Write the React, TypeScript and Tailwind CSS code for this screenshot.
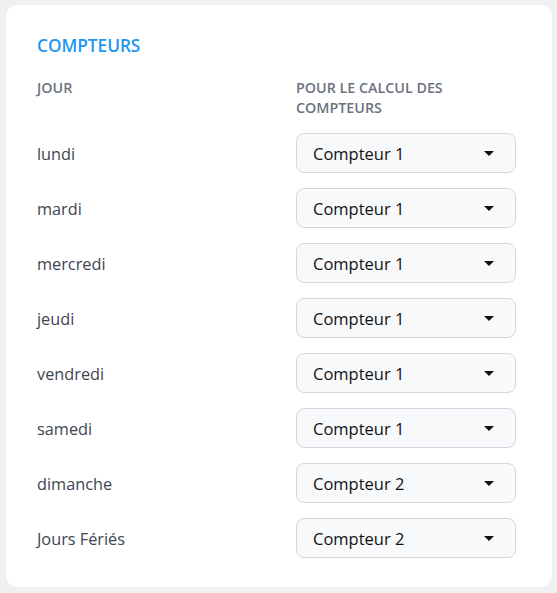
import React from "react";

const rows: { day: string; counter: string }[] = [
  { day: "lundi", counter: "Compteur 1" },
  { day: "mardi", counter: "Compteur 1" },
  { day: "mercredi", counter: "Compteur 1" },
  { day: "jeudi", counter: "Compteur 1" },
  { day: "vendredi", counter: "Compteur 1" },
  { day: "samedi", counter: "Compteur 1" },
  { day: "dimanche", counter: "Compteur 2" },
  { day: "Jours Fériés", counter: "Compteur 2" },
];

function Caret() {
  return (
    <svg width="10" height="5" viewBox="0 0 10 5" className="shrink-0">
      <path d="M0 0 L10 0 L5 5 Z" fill="#111111" />
    </svg>
  );
}

function CounterSelect({ value }: { value: string }) {
  return (
    <div className="flex h-[40px] w-[220px] items-center justify-between rounded-[8px] border border-[#d5d8de] bg-[#f8f9fb] pl-[16px] pr-[21px] text-[16.5px] text-[#111111]">
      <span className="pt-[2px]">{value}</span>
      <Caret />
    </div>
  );
}

export default function App() {
  return (
    <div
      className="min-h-[593px] bg-[#eff0f2] pl-[6px] pr-[5px] pt-[5px] pb-[6px]"
      style={{ fontFamily: '"Open Sans", "Noto Sans", sans-serif' }}
    >
      <div className="rounded-[12px] bg-white pl-[31px] pr-[36px] pt-[29px] pb-[29px]">
        <h2 className="text-[17.2px] font-semibold leading-[24px] text-[#2196f3]">COMPTEURS</h2>
        <div className="mt-[20px] grid grid-cols-[259px_220px] text-[14.3px] font-semibold leading-[20px] text-[#6b7280]">
          <div>JOUR</div>
          <div>
            POUR LE CALCUL DES
            <br />
            COMPTEURS
          </div>
        </div>
        <div className="mt-[15px] flex flex-col gap-[15px]">
          {rows.map((r) => (
            <div key={r.day} className="grid grid-cols-[259px_220px] items-center">
              <div className="pt-[2px] text-[16.3px] text-[#3e4552]">{r.day}</div>
              <CounterSelect value={r.counter} />
            </div>
          ))}
        </div>
      </div>
    </div>
  );
}
